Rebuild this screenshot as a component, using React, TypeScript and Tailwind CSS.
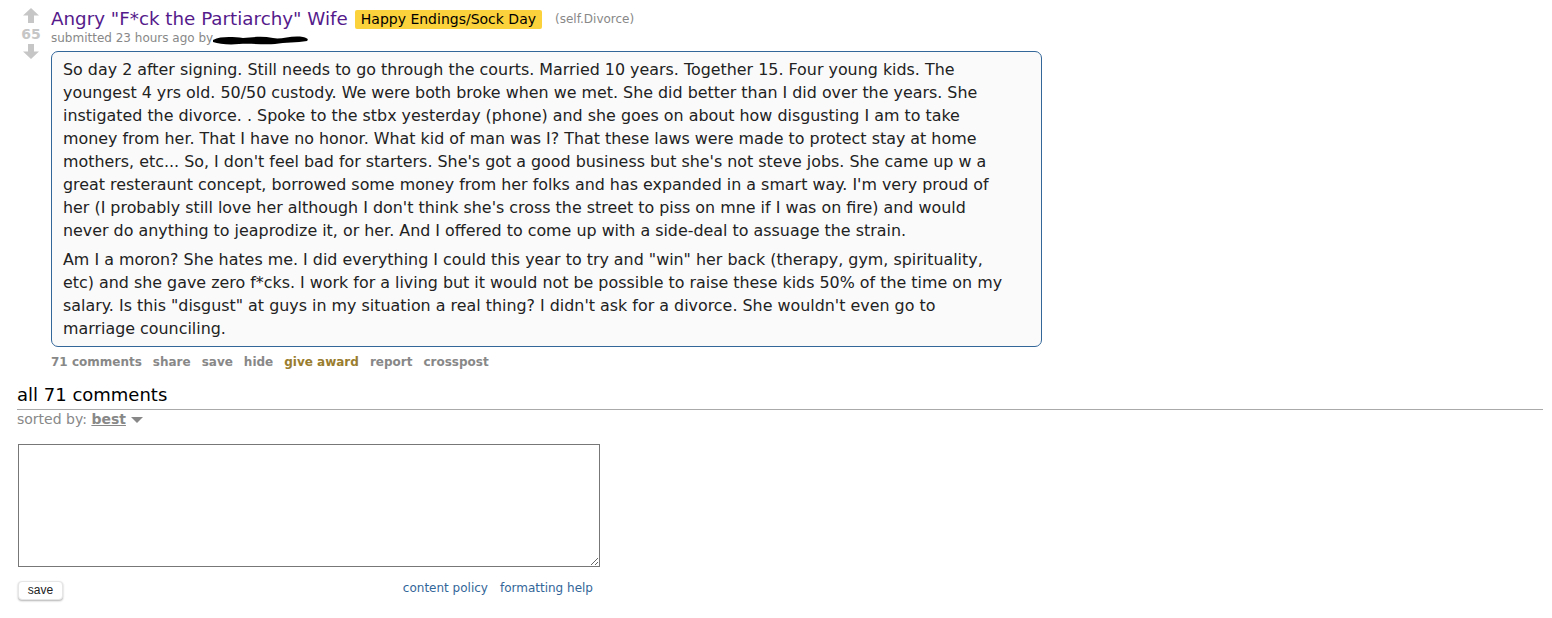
import { memo } from "react";

// old-reddit style self post with comment box

const bodyP1 = [
  "So day 2 after signing. Still needs to go through the courts. Married 10 years. Together 15. Four young kids. The",
  "youngest 4 yrs old. 50/50 custody. We were both broke when we met. She did better than I did over the years. She",
  "instigated the divorce. . Spoke to the stbx yesterday (phone) and she goes on about how disgusting I am to take",
  "money from her. That I have no honor. What kid of man was I? That these laws were made to protect stay at home",
  "mothers, etc... So, I don't feel bad for starters. She's got a good business but she's not steve jobs. She came up w a",
  "great resteraunt concept, borrowed some money from her folks and has expanded in a smart way. I'm very proud of",
  "her (I probably still love her although I don't think she's cross the street to piss on mne if I was on fire) and would",
  "never do anything to jeaprodize it, or her. And I offered to come up with a side-deal to assuage the strain.",
];

const bodyP2 = [
  "Am I a moron? She hates me. I did everything I could this year to try and \"win\" her back (therapy, gym, spirituality,",
  "etc) and she gave zero f*cks. I work for a living but it would not be possible to raise these kids 50% of the time on my",
  "salary. Is this \"disgust\" at guys in my situation a real thing? I didn't ask for a divorce. She wouldn't even go to",
  "marriage counciling.",
];

const actions = ["71 comments", "share", "save", "hide", "give award", "report", "crosspost"];

const Arrow = ({ down }: { down?: boolean }) => (
  <svg width="16" height="15" viewBox="0 0 16 15" className={down ? "rotate-180" : ""}>
    <path d="M8 0 L16 7.5 L11 7.5 L11 15 L5 15 L5 7.5 L0 7.5 Z" fill="#c6c6c6" />
  </svg>
);

const App = memo(() => {
  return (
    <div className="min-h-screen bg-white font-['DejaVu_Sans',Verdana,sans-serif] text-[#222]">
      {/* Post */}
      <div className="flex pt-[8px] pl-[21px]">
        <div className="flex w-[20px] flex-col items-center">
          <Arrow />
          <div className="mt-[3px] text-[14px] leading-[17px] font-bold text-[#c6c6c6]">65</div>
          <div className="mt-[1px]">
            <Arrow down />
          </div>
        </div>

        <div className="ml-[10px] flex-1">
          <div className="flex items-center">
            <span className="text-[18.3px] leading-[22px] text-[#551a8b]">
              Angry "F*ck the Partiarchy" Wife
            </span>
            <span className="ml-[7px] rounded-[2px] bg-[#fcd23c] px-[6px] py-[1px] text-[14px] leading-[17px] text-black">
              Happy Endings/Sock Day
            </span>
            <span className="ml-[13px] text-[12px] text-[#888]">(self.Divorce)</span>
          </div>
          <div className="mt-[1px] flex items-center text-[12px] leading-[15px] text-[#888]">
            <span>submitted 23 hours ago by</span>
            <svg width="100" height="14" viewBox="0 0 100 14" className="-ml-[2px]">
              <path
                d="M2 8 C10 4 22 5 32 6 C42 5 52 4 62 6 C70 8 80 3 92 5 C96 6 98 7 96 9 C86 11 74 10 64 12 C52 13 40 11 28 12 C18 13 8 12 2 10 Z"
                fill="#000"
              />
            </svg>
          </div>

          {/* Self text */}
          <div className="mt-[5px] w-[991px] rounded-[7px] border border-[#369] bg-[#fafafa] px-[11px] pt-[6px] pb-[6px] text-[15.9px] leading-[23px] whitespace-nowrap">
            <p>
              {bodyP1.map((line, i) => (
                <span key={i} className="block">
                  {line}
                </span>
              ))}
            </p>
            <p className="mt-[6px]">
              {bodyP2.map((line, i) => (
                <span key={i} className="block">
                  {line}
                </span>
              ))}
            </p>
          </div>

          <ul className="mt-[8px] flex gap-[11px] text-[12px] leading-[15px] font-bold text-[#888]">
            {actions.map((a) => (
              <li key={a} className={a === "give award" ? "text-[#9a7d2e]" : ""}>
                {a}
              </li>
            ))}
          </ul>
        </div>
      </div>

      {/* Comments area */}
      <div className="mt-[14px] pl-[17px] pr-[9px]">
        <div className="border-b border-[#aaa] pb-[3px] text-[18px] leading-[22px] text-black">all 71 comments</div>
        <div className="mt-[1px] flex items-center text-[14px] leading-[17px] text-[#888]">
          <span>sorted by:&nbsp;</span>
          <span className="font-bold underline text-[#888]">best</span>
          <svg width="14" height="10" viewBox="0 0 14 10" className="ml-[4px]">
            <path d="M1 2 L13 2 L7 8 Z" fill="#888" />
          </svg>
        </div>

        <div className="mt-[16px] w-[583px] pl-[1px]">
          <textarea className="block h-[123px] w-[582px] border border-[#777] bg-white" />
          <div className="mt-[14px] flex items-start justify-between">
            <button className="h-[19px] w-[45px] rounded-[4px] bg-white font-['Liberation_Sans',Arial,sans-serif] text-[12px] leading-[17px] text-[#222] shadow-[0_1px_2px_rgba(0,0,0,0.3)] border border-[#e6e6e6]">
              save
            </button>
            <div className="mr-[7px] flex gap-[12px] text-[12px] leading-[15px] text-[#336699]">
              <span>content policy</span>
              <span>formatting help</span>
            </div>
          </div>
        </div>
      </div>
    </div>
  );
});

App.displayName = "App";

export default App;
